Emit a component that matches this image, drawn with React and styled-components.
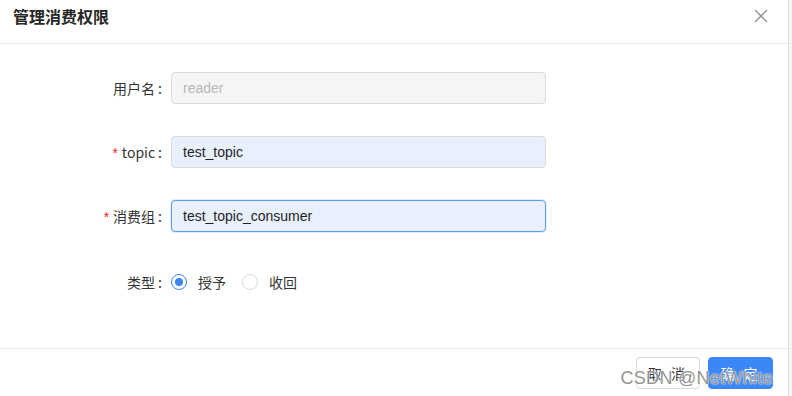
import React from 'react';
import styled, { createGlobalStyle } from 'styled-components';

const Global = createGlobalStyle`
  html, body {
    margin: 0;
    padding: 0;
    background: #fff;
  }
  body {
    font-family: "Noto Sans", "Noto Sans CJK SC", sans-serif;
  }
`;

const Page = styled.div`
  display: flex;
  width: 792px;
  height: 396px;
  background: #f4f4f4;
`;

const Dialog = styled.div`
  position: relative;
  display: flex;
  flex-direction: column;
  width: 788px;
  height: 396px;
  background: #fff;
  border-right: 1px solid #e2e2e2;
`;

const Header = styled.div`
  display: flex;
  align-items: center;
  justify-content: space-between;
  height: 43px;
  padding: 0 20px 0 13px;
  border-bottom: 1px solid #e8e8e8;
`;

const Title = styled.h2`
  margin: 0;
  margin-top: -12px;
  font-size: 16px;
  font-weight: 600;
  color: #262626;
  font-family: "Noto Sans CJK SC", sans-serif;
`;

const Close = styled.span`
  display: flex;
  margin-top: -11px;
  color: #8c8c8c;
`;

const Body = styled.div`
  flex: 1;
  display: flex;
  flex-direction: column;
  gap: 32px;
  padding-top: 28px;
`;

const Row = styled.div`
  display: flex;
  align-items: center;
  height: ${p => (p.$tall ? '36px' : '32px')};
`;

const Label = styled.label`
  width: 171px;
  box-sizing: border-box;
  padding-right: 9px;
  text-align: right;
  font-size: 14px;
  color: #333;
  font-family: "Noto Sans CJK SC", sans-serif;
  &::before {
    content: ${p => (p.$required ? '"* "' : '""')};
    color: #f5222d;
    font-family: "Liberation Sans", sans-serif;
  }
  &::after {
    content: ':';
    margin-left: 3px;
  }
`;

const Input = styled.div`
  width: 375px;
  height: 32px;
  box-sizing: border-box;
  display: flex;
  align-items: center;
  padding: 0 11px;
  border-radius: 4px;
  font-size: 14px;
  font-family: "Liberation Sans", sans-serif;
  background: ${p => (p.$disabled ? '#f5f5f5' : '#e8f0fe')};
  color: ${p => (p.$disabled ? '#b8b8b8' : '#1f1f1f')};
  border: 1px solid ${p => (p.$focus ? '#5b9ef7' : '#dadada')};
  box-shadow: ${p => (p.$focus ? '0 0 0 1px rgba(64,150,255,0.15)' : 'none')};
`;

const Radios = styled.div`
  display: flex;
  align-items: center;
  gap: 16px;
`;

const Option = styled.span`
  display: flex;
  align-items: center;
  gap: 11px;
  font-size: 14px;
  color: #333;
  font-family: "Noto Sans CJK SC", sans-serif;
`;

const Dot = styled.span`
  width: 16px;
  height: 16px;
  box-sizing: border-box;
  border-radius: 50%;
  border: 1px solid ${p => (p.$on ? '#3b87f5' : '#d9d9d9')};
  display: flex;
  align-items: center;
  justify-content: center;
  &::after {
    content: '';
    width: 8px;
    height: 8px;
    border-radius: 50%;
    background: ${p => (p.$on ? '#3b87f5' : 'transparent')};
  }
`;

const Footer = styled.div`
  display: flex;
  justify-content: flex-end;
  align-items: center;
  gap: 8px;
  height: 47px;
  padding: 0 15px 0 0;
  border-top: 1px solid #e8e8e8;
`;

const Button = styled.button`
  height: 32px;
  width: ${p => (p.$primary ? '65px' : '64px')};
  border-radius: 4px;
  font-size: 14px;
  font-family: "Noto Sans CJK SC", sans-serif;
  letter-spacing: 3px;
  border: 1px solid ${p => (p.$primary ? '#3b87f5' : '#d9d9d9')};
  background: ${p => (p.$primary ? '#3b87f5' : '#fff')};
  color: ${p => (p.$primary ? '#fff' : '#333')};
`;

const Watermark = styled.span`
  position: absolute;
  right: 15px;
  bottom: 7px;
  font-size: 18px;
  font-family: "Liberation Sans", sans-serif;
  color: rgba(110, 110, 110, 0.75);
  text-shadow: 0 0 2px #fff, 0 0 1px #fff;
  letter-spacing: 0.3px;
  pointer-events: none;
`;

export default function App() {
  return (
    <Page>
      <Global />
      <Dialog>
        <Header>
          <Title>管理消费权限</Title>
          <Close>
            <svg width="14" height="14" viewBox="0 0 14 14">
              <path d="M1 1L13 13M13 1L1 13" stroke="currentColor" strokeWidth="1.3" />
            </svg>
          </Close>
        </Header>
        <Body>
          <Row>
            <Label>用户名</Label>
            <Input $disabled>reader</Input>
          </Row>
          <Row>
            <Label $required>topic</Label>
            <Input>test_topic</Input>
          </Row>
          <Row>
            <Label $required>消费组</Label>
            <Input $focus>test_topic_consumer</Input>
          </Row>
          <Row $tall>
            <Label>类型</Label>
            <Radios>
              <Option><Dot $on />授予</Option>
              <Option><Dot />收回</Option>
            </Radios>
          </Row>
        </Body>
        <Footer>
          <Button>取 消</Button>
          <Button $primary>确 定</Button>
        </Footer>
        <Watermark>CSDN @NetWhite</Watermark>
      </Dialog>
    </Page>
  );
}
